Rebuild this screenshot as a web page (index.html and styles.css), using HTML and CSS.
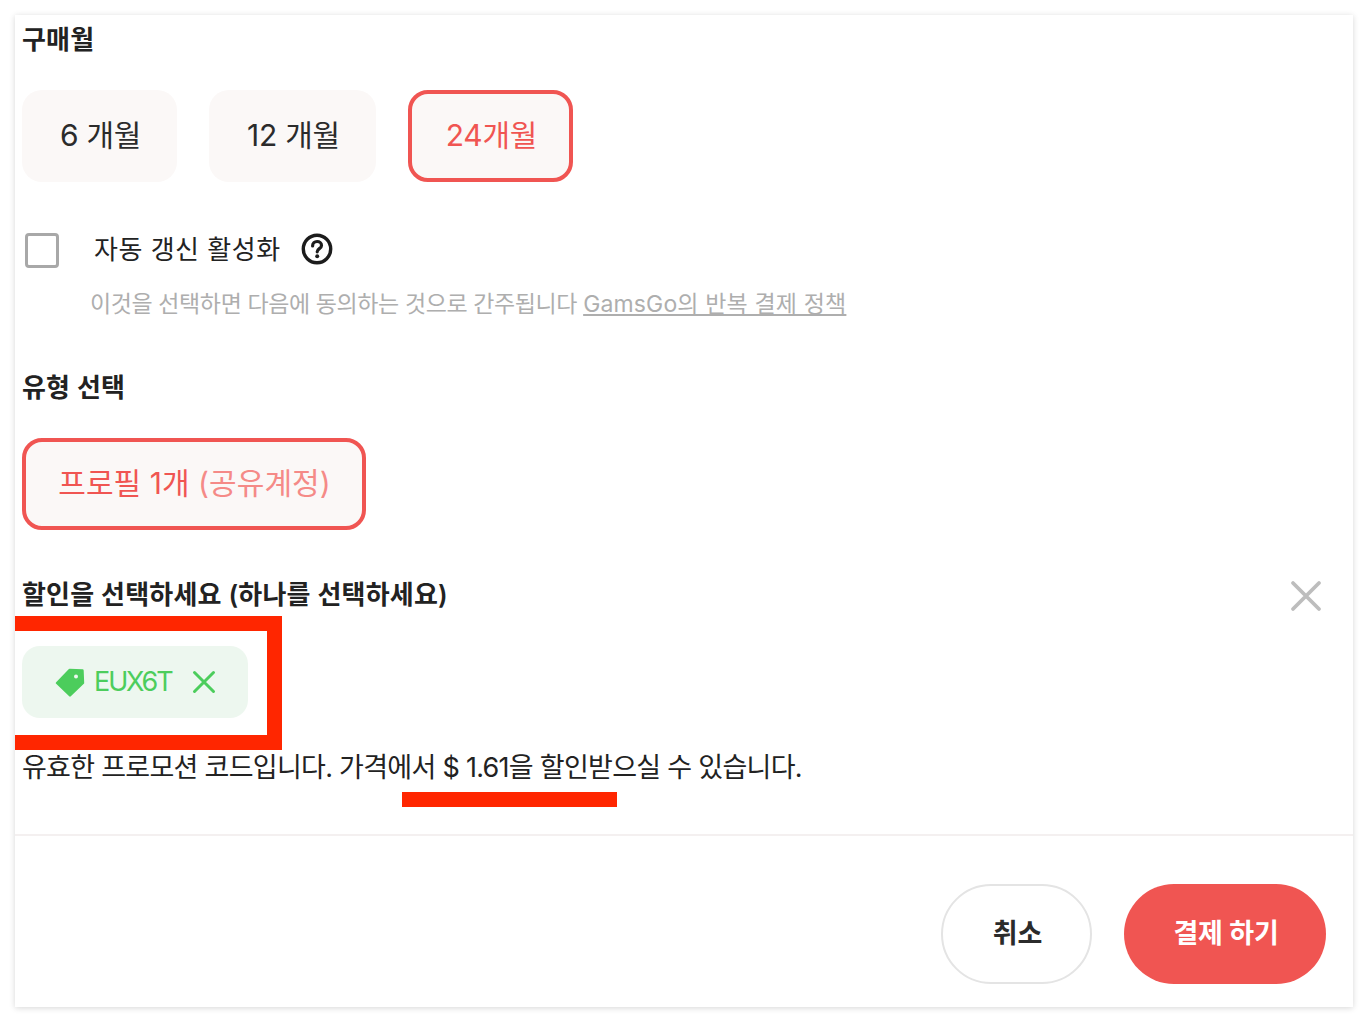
FILE: index.html
```html
<!DOCTYPE html>
<html lang="ko">
<head>
<meta charset="utf-8">
<title>구매월</title>
<link rel="stylesheet" href="styles.css">
</head>
<body>
<main class="card">
  <div class="content">
    <h2 class="title">구매월</h2>
    <div class="options months">
      <button class="opt opt-6">6 개월</button>
      <button class="opt opt-12">12 개월</button>
      <button class="opt opt-24 active">24개월</button>
    </div>
    <div class="renew">
      <span class="check"></span>
      <span class="renew-label">자동 갱신 활성화</span>
      <svg class="help" width="32" height="32" viewBox="0 0 32 32" aria-hidden="true">
        <circle cx="16" cy="16" r="13.7" fill="none" stroke="#1c1c1c" stroke-width="3.4"/>
        <path d="M11.600 12.900c0-2.700 2-4.400 4.500-4.400s4.400 1.600 4.400 3.900c0 3.300-4.300 3.200-4.300 6.400" fill="none" stroke="#1c1c1c" stroke-width="3.200" stroke-linecap="round"/>
        <circle cx="16.200" cy="23.300" r="2" fill="#1c1c1c"/>
      </svg>
    </div>
    <p class="note">이것을 선택하면 다음에 동의하는 것으로 간주됩니다 <a href="#">GamsGo의 반복 결제 정책</a></p>
    <h2 class="title type-title">유형 선택</h2>
    <button class="opt profile active">프로필 1개 <span class="soft">(공유계정)</span></button>
    <div class="discount-head">
      <h2 class="title">할인을 선택하세요 (하나를 선택하세요)</h2>
      <svg class="close" width="32" height="32" viewBox="0 0 32 32" aria-hidden="true">
        <path d="M3 3 L29 29 M29 3 L3 29" stroke="#bdbdbd" stroke-width="3.800" stroke-linecap="round"/>
      </svg>
    </div>
    <div class="chip">
      <svg class="tag" width="30" height="30" viewBox="0 0 30 30" aria-hidden="true">
        <path d="M2 16 L14.500 3 L27.500 3.500 L28 16 L15 28.500 Z" fill="#4ccd5c" stroke="#4ccd5c" stroke-width="2.400" stroke-linejoin="round"/>
        <circle cx="21" cy="9.500" r="2" fill="#edf7ef"/>
      </svg>
      <span class="code">EUX6T</span>
      <svg class="chip-x" width="24" height="24" viewBox="0 0 24 24" aria-hidden="true">
        <path d="M2.500 2.500 L21.500 21.500 M21.500 2.500 L2.500 21.500" stroke="#4ccd5c" stroke-width="3" stroke-linecap="round"/>
      </svg>
    </div>
    <p class="valid">유효한 프로모션 코드입니다. 가격에서 $ 1.61을 할인받으실 수 있습니다.</p>
  </div>
  <footer class="actions">
    <button class="btn cancel">취소</button>
    <button class="btn pay">결제 하기</button>
  </footer>
  <div class="mark-box"></div>
  <div class="mark-line"></div>
</main>
</body>
</html>
```
FILE: styles.css
```css
* { box-sizing: border-box; }
html, body { margin: 0; padding: 0; background: #fff; }
body {
  height: 1022px;
  padding: 15px;
  overflow: hidden;
  font-family: "Inter", "Noto Sans CJK KR", sans-serif;
  color: #222;
}
.card {
  position: relative;
  width: 1338px;
  height: 992px;
  background: #fff;
  box-shadow: 0 1px 6px rgba(0, 0, 0, 0.16);
  display: flex;
  flex-direction: column;
}
.content { padding: 9px 32px 0 7px; height: 821px; border-bottom: 2px solid #f4f0f0; }
.title {
  margin: 0;
  font-size: 26px;
  line-height: 32px;
  font-weight: 600;
  color: #222;
  letter-spacing: 0.2px;
}
.options { display: flex; gap: 32px; margin-top: 34px; }
button { font-family: inherit; }
.opt {
  height: 92px;
  border: 4px solid transparent;
  border-radius: 20px;
  background: #fbf8f7;
  font-size: 30px;
  font-weight: 400;
  color: #2b2b2b;
  letter-spacing: -0.25px;
  padding: 0 0 6px 2px;
}
.opt-6 { width: 155px; }
.opt-12 { width: 167px; }
.opt-24 { width: 165px; }
.opt.active { border-color: #f05552; color: #f05552; }
.renew { display: flex; align-items: center; margin-top: 50px; height: 36px; }
.check {
  width: 34px;
  height: 35px;
  margin-left: 3px;
  border: 3px solid #a8a8a8;
  border-radius: 4px;
}
.renew-label { margin-left: 35px; padding-bottom: 6px; font-size: 26px; letter-spacing: 0.5px; color: #222; }
.help { margin-left: 20px; margin-bottom: 3px; }
.note { margin: 20px 0 0 68px; font-size: 23px; line-height: 32px; color: #aeaeae; letter-spacing: -0.4px; }
.note a { color: #aeaeae; text-decoration: underline; letter-spacing: 0.15px; }
.type-title { margin-top: 52px; }
.opt.profile { display: block; width: 344px; margin-top: 34px; padding: 0 0 6px 1px; letter-spacing: 0.05px; }
.soft { color: #f58a87; }
.discount-head { display: flex; justify-content: space-between; align-items: center; margin-top: 49px; height: 32px; }
.close { margin-top: 2px; margin-right: -1px; }
.chip {
  display: flex;
  align-items: center;
  width: 226px;
  height: 72px;
  margin-top: 35px;
  padding-left: 33px;
  border-radius: 18px;
  background: #edf7ef;
}
.code { margin-left: 9px; padding-bottom: 2px; font-size: 27px; font-weight: 400; color: #4ccd5c; letter-spacing: -2.1px; }
.chip-x { margin-left: 20px; }
.valid { margin: 32px 0 0; font-size: 27px; line-height: 36px; color: #222; letter-spacing: -0.72px; }
.actions { flex: 1; display: flex; justify-content: flex-end; gap: 32px; padding: 48px 27px 0 0; }
.btn { height: 100px; border-radius: 50px; padding: 0 0 6px 2px; font-size: 27px; font-weight: 600; letter-spacing: -0.2px; }
.cancel { width: 151px; background: #fff; border: 2px solid #e4e4e4; color: #2b2b2b; }
.pay { width: 202px; background: #f05552; border: 0; color: #fff; }
.mark-box {
  position: absolute;
  left: 0;
  top: 601px;
  width: 267px;
  height: 134px;
  border: 15px solid #ff2600;
  border-left: 0;
}
.mark-line { position: absolute; left: 387px; top: 777px; width: 215px; height: 15px; background: #ff2600; }
```
